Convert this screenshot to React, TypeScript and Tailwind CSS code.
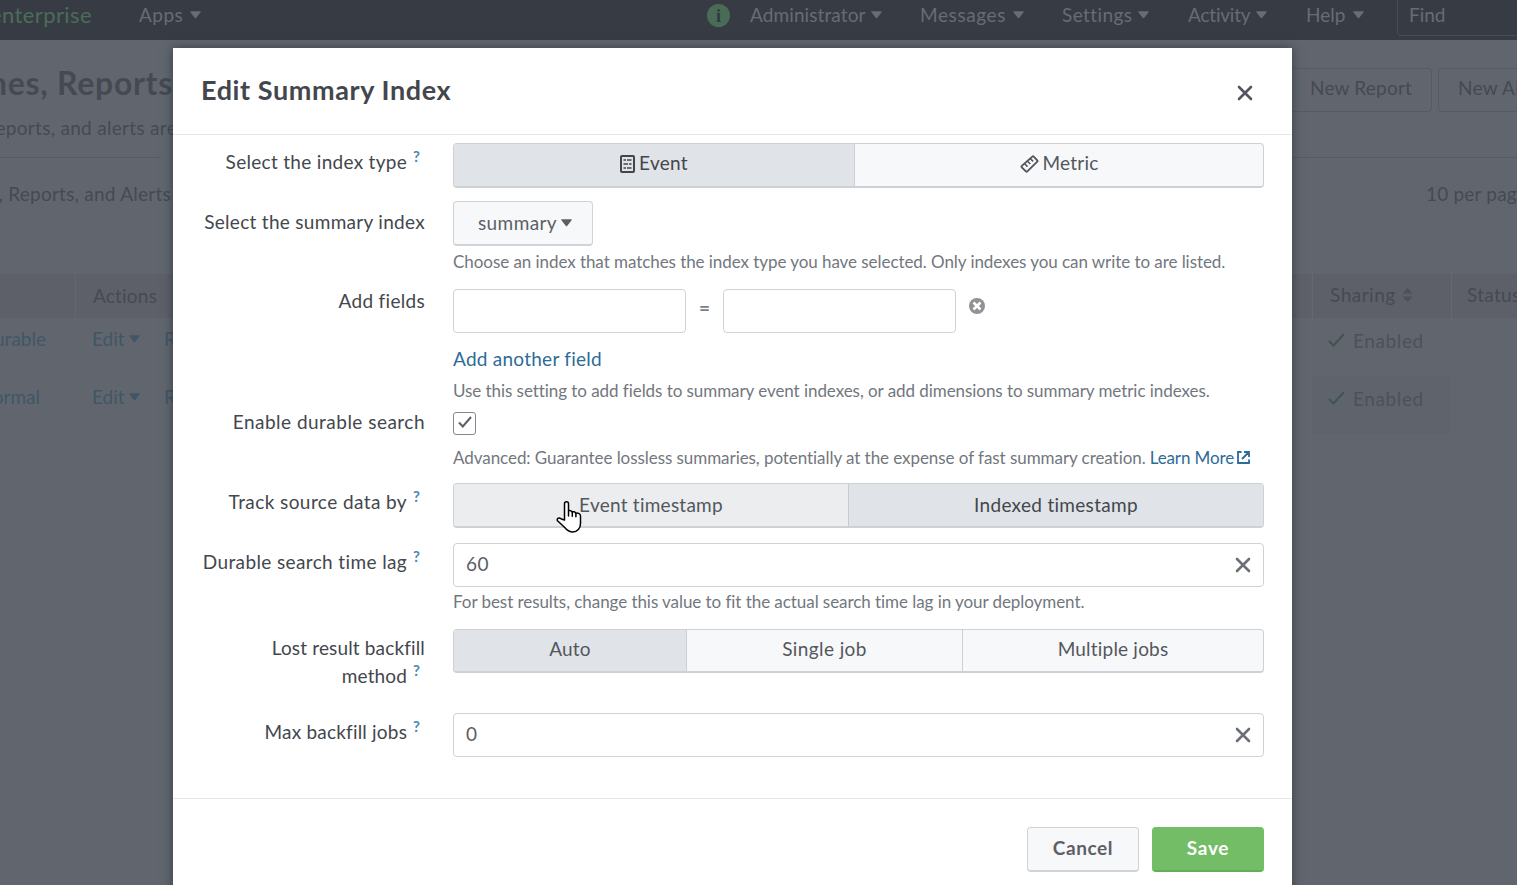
import React from "react";

const ENABLED = "Enabled";

function Caret({ className = "" }: { className?: string }) {
  return (
    <svg width="11" height="8" viewBox="0 0 11 8" className={`shrink-0 ${className}`} fill="currentColor">
      <path d="M0.800 0.300h9.400c.5 0 .7.5.4.900L6.100 7c-.3.400-.9.400-1.200 0L.4 1.200C.1.800.3.300.8.300z" />
    </svg>
  );
}

function Cross({ size = 16, className = "" }: { size?: number; className?: string }) {
  return (
    <svg width={size} height={size} viewBox="0 0 16 16" className={className} fill="none" stroke="currentColor" strokeWidth="2.6" strokeLinecap="round">
      <path d="M2 2l12 12M14 2L2 14" />
    </svg>
  );
}

function EventIcon() {
  return (
    <svg width="15" height="18" viewBox="0 0 15 18" fill="none" stroke="currentColor">
      <rect x="1" y="1" width="13" height="16" rx="1" strokeWidth="2" />
      <path d="M3.500 5h2.500M7 5h4.500M3.500 9h4.500M9 9h2.500M3.500 13h2.500M7 13h4.500" strokeWidth="1.700" />
    </svg>
  );
}

function MetricIcon() {
  return (
    <svg width="19" height="18" viewBox="0 0 19 18" fill="none" stroke="currentColor" strokeWidth="1.900" strokeLinejoin="round">
      <path d="M12.300 1.600q.7-.7 1.400 0l3.600 3.700q.7.700 0 1.400L7.300 16.400q-.7.700-1.400 0L1.800 12.300q-.7-.7 0-1.400z" />
      <path d="M10.400 3.600l2.700 2.800M7.600 6.200l2.700 2.800M4.800 8.800l2.700 2.800" strokeWidth="1.600" />
    </svg>
  );
}

function Hand() {
  return (
    <svg width="26" height="34" viewBox="0 0 26 34" fill="#fff" stroke="#000" strokeWidth="1.5" strokeLinejoin="round" strokeLinecap="round">
      <path d="M8.500 20V3.800a2 2 0 0 1 4 0v7.200c.8-.7 3.300-.5 3.700 1.100.9-.7 3-.4 3.500 1.200 1.500-.7 4.800 0 4.800 2.700v7.500c0 4.800-3.200 8.500-7.700 8.500-4.300 0-6.200-2.100-8.300-4.700L1.500 20.800c-.6-1.200-.2-2.300.8-2.600 1.200-.3 2.200.2 3 .8z" />
      <path d="M12.500 11.500v4.500M16.300 12.500v3.800M19.900 13.800v3" fill="none" />
    </svg>
  );
}

function NavItem({ label, className }: { label: string; className: string }) {
  return (
    <div className={`flex shrink-0 items-center justify-between ${className}`}>
      <span>{label}</span>
      <Caret />
    </div>
  );
}

function Background() {
  return (
    <div className="flex h-full flex-col overflow-hidden whitespace-nowrap bg-[#61666e] text-[19px] text-[#454a52]">
      <div className="flex h-10 shrink-0 items-start bg-[#373b44] pt-[3px] leading-6 text-[#686c73]">
        <div className="flex w-[92px] shrink-0 justify-end text-[22px] tracking-[0.4px] text-[#4b6d57]">enterprise</div>
        <NavItem label="Apps" className="ml-[47px] w-[62px] tracking-[0.5px]" />
        <div className="ml-[506px] mt-[1px] flex size-[23px] shrink-0 items-center justify-center rounded-full bg-[#4a6b55] font-['Liberation_Serif',serif] text-[18px] font-bold text-[#343941]">i</div>
        <NavItem label="Administrator" className="ml-5 w-[132px] tracking-[0.1px]" />
        <NavItem label="Messages" className="ml-[38px] w-[104px] tracking-[0.6px]" />
        <NavItem label="Settings" className="ml-[38px] w-[87px] tracking-[0.4px]" />
        <NavItem label="Activity" className="ml-[39px] w-[79px] tracking-[-0.2px]" />
        <NavItem label="Help" className="ml-[39px] w-[58px]" />
        <div className="-mt-1.5 ml-[33px] h-[39px] w-[140px] shrink-0 rounded border border-[#484c54] pl-[11px] pt-[5px]">Find</div>
      </div>
      <div className="flex h-[118px] shrink-0 justify-between">
        <div className="w-[161px] border-b border-[#565b63]">
          <div className="flex w-[173px] justify-end pt-[23px] text-[32px] font-bold leading-10 tracking-[0.7px]">Searches, Reports</div>
          <div className="flex w-[177px] justify-end pt-[13px] leading-6 tracking-[0.3px]">reports, and alerts are</div>
        </div>
        <div className="flex w-[229px] gap-1.5 border-b border-[#565b63] pt-7">
          <div className="flex h-11 w-[144px] shrink-0 items-center rounded border border-[#565b63] pl-[21px] pb-[3px] tracking-[0.2px]">New Report</div>
          <div className="flex h-11 w-[130px] shrink-0 items-center rounded border border-[#565b63] pl-[19px] pb-[3px] tracking-[0.3px]">New Alert</div>
        </div>
      </div>
      <div className="flex h-[116px] shrink-0 justify-between pt-6 leading-6">
        <div className="flex w-[171px] justify-end tracking-[0.25px]">Searches, Reports, and Alerts</div>
        <div className="w-[91px] tracking-[0.2px]">10 per page</div>
      </div>
      <div className="flex h-11 shrink-0 items-center justify-between bg-[#5e6069]">
        <div className="flex h-full w-[200px] items-center">
          <div className="h-full w-[76px] border-r border-[#626770]" />
          <span className="pl-[17px] tracking-[0.2px]">Actions</span>
        </div>
        <div className="flex h-full w-[205px] items-center">
          <div className="flex h-full w-[140px] shrink-0 items-center gap-1.5 border-l border-r border-[#646971] pl-[17px] pb-0.5 tracking-[0.5px]">
            Sharing
            <svg width="11" height="14" viewBox="0 0 11 14" fill="#4d5159"><path d="M5.500 0L10.500 5.500H.5zM5.500 14L.5 8.500h10z" /></svg>
          </div>
          <span className="pb-0.5 pl-[15px] tracking-[0.3px]">Status</span>
        </div>
      </div>
      {["durable", "normal"].map((name) => (
        <div key={name} className="flex h-[58px] shrink-0 justify-between leading-6 text-[#405666]">
          <div className="flex pt-[9px]">
            <div className={name === "durable" ? "flex w-[46px] justify-end" : "flex w-[40px] justify-end"}>{name}</div>
            <NavItem label="Edit" className={name === "durable" ? "ml-[46px] w-[48px] h-6" : "ml-[52px] w-[48px] h-6"} />
            <span className="ml-6">Run</span>
          </div>
          <div className="flex w-[205px]">
            <div className={`flex w-[139px] items-start gap-2 pl-4 pt-[11px] text-[#4c5159] ${name === "normal" ? "bg-[#5f646c]" : ""}`}>
              <svg width="17" height="14" viewBox="0 0 17 14" className="mt-1" fill="none" stroke="#40544d" strokeWidth="2"><path d="M1 8l4.500 4.500L16 1" /></svg>
              <span className="tracking-[0.6px]">{ENABLED}</span>
            </div>
          </div>
        </div>
      ))}
    </div>
  );
}

function Row({ label, hint, className, pad, children }: { label?: React.ReactNode; hint?: boolean; className: string; pad: string; children: React.ReactNode }) {
  return (
    <div className={`flex shrink-0 ${className}`}>
      <div className={`flex w-[252px] shrink-0 justify-end text-right leading-7 text-[#43474d] ${pad}`}>
        <div>
          {label}
          {hint && <Hint />}
        </div>
      </div>
      <div className="ml-7 w-[811px]">{children}</div>
    </div>
  );
}

function Hint() {
  return <span className="relative -top-[7px] ml-1.5 mr-[5px] inline-block text-[15px] font-bold leading-3 tracking-normal text-[#4a88b3]">?</span>;
}

function Segment({ className, children }: { className: string; children: React.ReactNode }) {
  return <button className={`flex h-full shrink-0 items-center justify-center gap-1 ${className}`}>{children}</button>;
}

function Segments({ className = "h-[45px] tracking-[0.3px]", children }: { className?: string; children: React.ReactNode }) {
  return <div className={`flex overflow-hidden rounded border border-b-2 border-[#cdd1d6] bg-[#f7f8fa] text-[#53575d] ${className}`}>{children}</div>;
}

function Help({ className = "", children }: { className?: string; children: React.ReactNode }) {
  return <p className={`flex whitespace-nowrap text-[17px] leading-6 tracking-[-0.06px] text-[#72777e] ${className}`}>{children}</p>;
}

function ValueBox({ value }: { value: string }) {
  return (
    <div className="flex h-11 items-center justify-between rounded border border-[#cfd2d6] bg-white px-3 text-[#5c6066]">
      <span className="pb-px tracking-[0.5px]">{value}</span>
      <Cross className="text-[#6b7077]" />
    </div>
  );
}

function Modal() {
  return (
    <div className="absolute left-[173px] top-12 flex h-[860px] w-[1119px] flex-col bg-white text-[19px] shadow-[0_0_10px_rgba(30,35,45,0.6)]">
      <div className="flex h-[87px] shrink-0 items-center justify-between border-b border-[#e6e8ea] pl-7 pr-[39px]">
        <h1 className="pb-0.5 text-[27px] font-bold tracking-[0.6px] text-[#43474d]">Edit Summary Index</h1>
        <Cross className="mt-1 text-[#53575d]" />
      </div>
      <div className="flex h-[664px] shrink-0 flex-col border-b border-[#e6e8ea] pt-2">
        <Row label="Select the index type" hint className="h-[58px]" pad="pt-[5px] tracking-[0.3px]">
          <Segments>
            <Segment className="w-[401px] border-r border-[#cdd1d6] bg-[#e0e3e8] pb-[3px] text-[#43474d]"><EventIcon />Event</Segment>
            <Segment className="w-[408px] pb-[3px] tracking-[0.2px]"><MetricIcon />Metric</Segment>
          </Segments>
        </Row>
        <Row label="Select the summary index" className="h-[88px]" pad="pt-[7px] tracking-[0.3px]">
          <button className="flex h-[45px] w-[140px] items-center justify-center gap-1 rounded border border-b-2 border-[#d0d3d7] bg-[#f7f8fa] pl-1 tracking-[0.4px] text-[#5c6066]">summary<Caret /></button>
          <Help className="mt-1">Choose an index that matches the index type you have selected. Only indexes you can write to are listed.</Help>
        </Row>
        <Row label="Add fields" className="h-[123px]" pad="-mt-0.5 tracking-[0.3px]">
          <div className="flex h-11">
            <div className="w-[233px] rounded border border-[#cfd2d6]" />
            <span className="w-[37px] pt-[5px] text-center text-[19px] font-bold text-[#7c8187]">=</span>
            <div className="w-[233px] rounded border border-[#cfd2d6]" />
            <svg width="16" height="16" viewBox="0 0 16 16" className="ml-[13px] mt-[9px]"><circle cx="8" cy="8" r="8" fill="#8f9296" /><path d="M4.500 4.500l7 7M11.500 4.500l-7 7" stroke="#fff" strokeWidth="2.500" /></svg>
          </div>
          <a className="mt-3 block leading-7 tracking-[0.25px] text-[#2d6b98]">Add another field</a>
          <Help className="mt-1.5">Use this setting to add fields to summary event indexes, or add dimensions to summary metric indexes.</Help>
        </Row>
        <Row label="Enable durable search" className="h-[71px]" pad="-mt-1 tracking-[0.48px]">
          <div className="flex size-[23px] items-center justify-center rounded-[3px] border-[1.500px] border-[#85898e] pb-1">
            <svg width="14" height="12" viewBox="0 0 14 12" fill="none" stroke="#5c6066" strokeWidth="2"><path d="M1 6.500l3.800 4L13 1" /></svg>
          </div>
          <Help className="mt-[11px]">
            Advanced: Guarantee lossless summaries, potentially at the expense of fast summary creation.
            <a className="ml-1 flex items-center gap-[3px] tracking-[-0.1px] text-[#2d6b98]">Learn More
              <svg width="13" height="13" viewBox="0 0 13 13" fill="none" stroke="currentColor" strokeWidth="1.800" className="-mt-px"><path d="M4.500 1H1v11h11V8.500M7 1h5v5M12 1L5 8" /></svg>
            </a>
          </Help>
        </Row>
        <Row label="Track source data by" hint className="h-[60px]" pad="pt-[5px] tracking-[0.42px]">
          <Segments>
            <Segment className="w-[395px] border-r border-[#c8ccd2] bg-[#ebedef] tracking-[0.25px]">Event timestamp</Segment>
            <Segment className="w-[414px] bg-[#e0e3e8] text-[#43474d]">Indexed timestamp</Segment>
          </Segments>
        </Row>
        <Row label="Durable search time lag" hint className="h-[86px]" pad="pt-[5px] tracking-[0.38px]">
          <ValueBox value="60" />
          <Help className="mt-[3px]">For best results, change this value to fit the actual search time lag in your deployment.</Help>
        </Row>
        <Row label={<>Lost result backfill<br />method</>} hint className="h-[84px]" pad="pt-[5px] tracking-[0.15px]">
          <Segments className="h-11 tracking-[0.2px]">
            <Segment className="w-[233px] border-r border-[#cdd1d6] bg-[#e0e3e8] pb-0.5">Auto</Segment>
            <Segment className="w-[276px] border-r border-[#cdd1d6] pb-0.5 tracking-[0.4px]">Single job</Segment>
            <Segment className="w-[300px] pb-0.5">Multiple jobs</Segment>
          </Segments>
        </Row>
        <Row label="Max backfill jobs" hint className="h-[85px]" pad="pt-[5px] tracking-[0.2px]">
          <ValueBox value="0" />
        </Row>
      </div>
      <div className="flex justify-end gap-[13px] pr-7 pt-7 font-bold">
        <button className="h-[45px] w-[112px] rounded border border-b-2 border-[#cfd2d6] bg-[#f7f8fa] pb-0.5 tracking-[0.6px] text-[#5c6066]">Cancel</button>
        <button className="h-[45px] w-[112px] rounded border-b-2 border-[#66ad5a] bg-[#74bd67] tracking-[0.7px] text-white">Save</button>
      </div>
    </div>
  );
}

export default function App() {
  return (
    <div className="relative h-[885px] w-[1517px] overflow-hidden font-[Lato,sans-serif]">
      <Background />
      <Modal />
      <div className="absolute left-[556px] top-[500px]"><Hand /></div>
    </div>
  );
}
